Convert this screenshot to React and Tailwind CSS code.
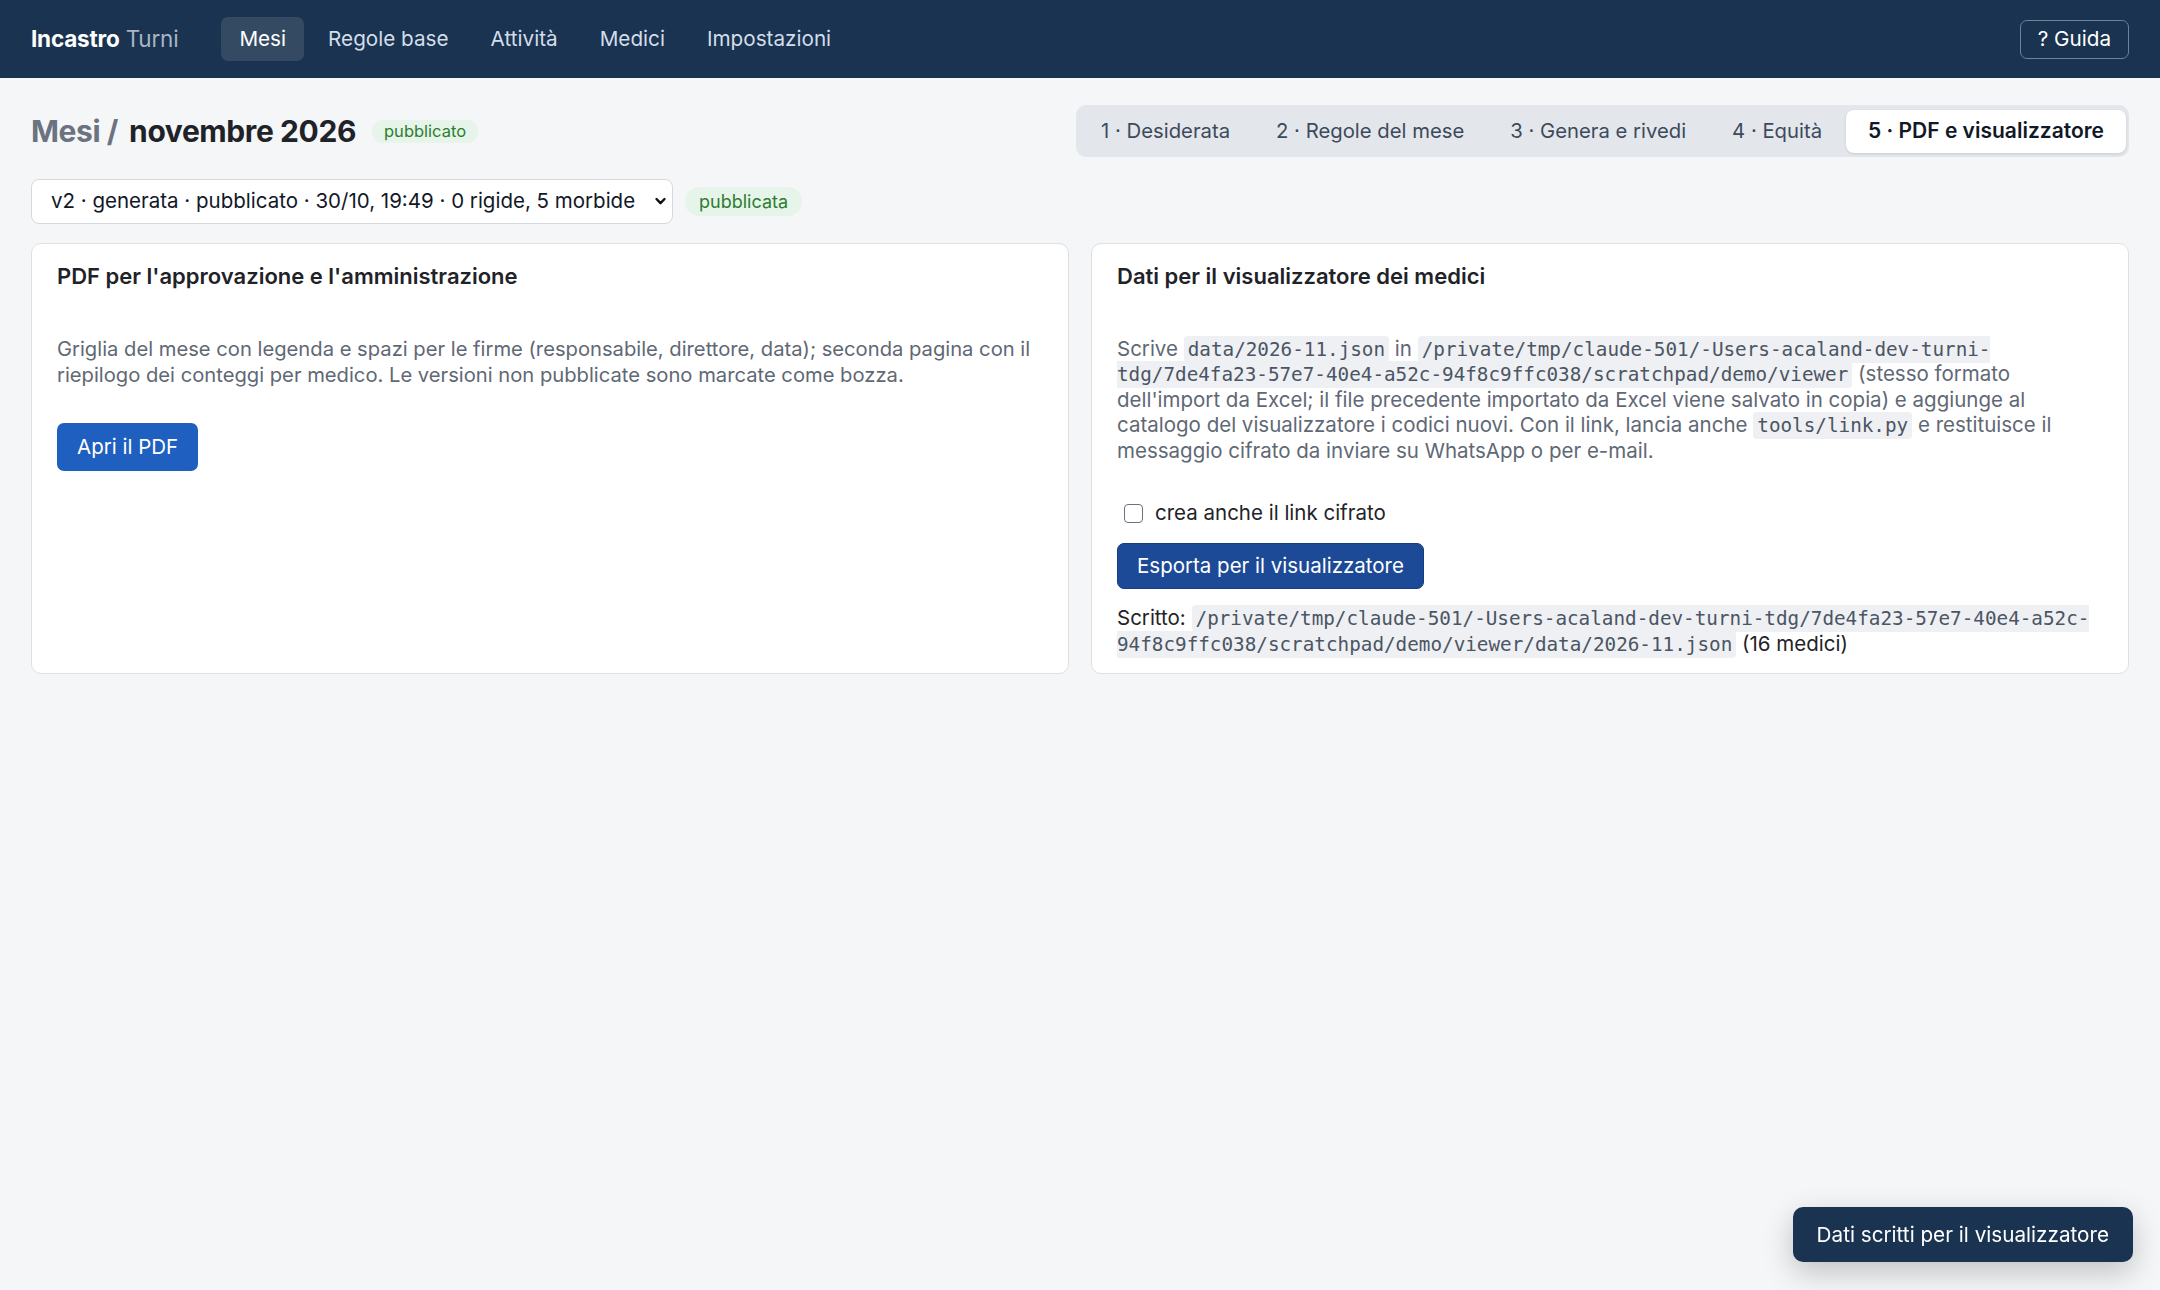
import React from "react";

const navItems = ["Mesi", "Regole base", "Attività", "Medici", "Impostazioni"];
const tabs = [
  "1 · Desiderata",
  "2 · Regole del mese",
  "3 · Genera e rivedi",
  "4 · Equità",
  "5 · PDF e visualizzatore",
];

function Code({ children }) {
  return (
    <code className="font-['DejaVu_Sans_Mono',monospace] text-[19.3px] leading-none bg-[#eef0f3] text-[#4b5563] rounded-[4px] px-[4px] py-[2px]">
      {children}
    </code>
  );
}

export default function App() {
  return (
    <div className="min-h-screen bg-[#f5f6f8] font-['Inter','Noto_Sans',sans-serif] text-[#1f2328]">
      <header className="h-[78px] bg-[#1a3350] flex items-center pl-[31px] pr-[31px]">
        <div className="text-[22.5px] tracking-[-0.2px]">
          <span className="font-bold text-white">Incastro</span>{" "}
          <span className="text-[#a9b5c4]">Turni</span>
        </div>
        <nav className="ml-[43px] flex items-center gap-[6px]">
          {navItems.map((n, i) => (
            <a
              key={n}
              className={
                i === 0
                  ? "h-[44px] flex items-center px-[18px] rounded-[7px] bg-[#344a63] text-white text-[20.7px]"
                  : "h-[44px] flex items-center px-[18px] rounded-[7px] text-[#d3deea] text-[20.7px]"
              }
            >
              {n}
            </a>
          ))}
        </nav>
        <button className="ml-auto h-[39px] px-[17px] rounded-[7px] border border-[#6c819a] text-white text-[20.7px] flex items-center">
          ? Guida
        </button>
      </header>

      <main className="px-[31px] pt-[27px]">
        <div className="flex items-center justify-between">
          <div className="flex items-center">
            <h1 className="text-[30px] font-bold tracking-[-0.4px] leading-none">
              <span className="text-[#6b7280]">Mesi /</span>
              <span className="ml-[11px] text-[#1f2328]">novembre 2026</span>
            </h1>
            <span className="ml-[16px] h-[23px] px-[12px] rounded-full bg-[#e6f4e9] text-[#2e7d32] text-[16.5px] flex items-center">
              pubblicato
            </span>
          </div>
          <div className="h-[52px] flex items-center gap-[2px] px-[3px] rounded-[10px] bg-[#e3e6eb]">
            {tabs.map((t, i) => (
              <div
                key={t}
                className={
                  i === 4
                    ? "h-[43px] flex items-center px-[22px] rounded-[8px] bg-white text-[#111827] font-semibold text-[21px] shadow-[0_1px_3px_rgba(0,0,0,0.12)]"
                    : "h-[43px] flex items-center px-[22px] rounded-[8px] text-[#3d4a5c] text-[20.3px]"
                }
              >
                {t}
              </div>
            ))}
          </div>
        </div>

        <div className="mt-[22px] flex items-center gap-[12px]">
          <div className="relative">
            <select className="appearance-none w-[642px] h-[45px] pl-[19px] pr-[30px] bg-white border border-[#d5d9df] rounded-[8px] text-[20.5px] text-[#111827] outline-none">
              <option>v2 · generata · pubblicato · 30/10, 19:49 · 0 rigide, 5 morbide</option>
            </select>
            <svg
              className="absolute right-[6px] top-[17px] pointer-events-none"
              width="13"
              height="11"
              viewBox="0 0 13 11"
              fill="none"
            >
              <path d="M2.5 3l4 4.2 4-4.2" stroke="#111" strokeWidth="2.4" strokeLinecap="round" strokeLinejoin="round" />
            </svg>
          </div>
          <span className="h-[29px] px-[14px] rounded-full bg-[#e6f4e9] text-[#2e7d32] text-[18px] flex items-center">
            pubblicata
          </span>
        </div>

        <div className="mt-[19px] grid grid-cols-2 gap-[22px]">
          <section className="bg-white border border-[#dde0e5] rounded-[10px] px-[25px] pt-[19px] pb-[16px]">
            <h2 className="text-[22px] font-semibold leading-[26px] text-[#1f2328]">
              PDF per l'approvazione e l'amministrazione
            </h2>
            <p className="mt-[47px] text-[20.2px] leading-[26px] text-[#5f6875]">
              Griglia del mese con legenda e spazi per le firme (responsabile, direttore, data); seconda pagina con il riepilogo dei conteggi per medico. Le versioni non pubblicate sono marcate come bozza.
            </p>
            <button className="mt-[35px] h-[48px] px-[20px] rounded-[7px] bg-[#1f5fbf] text-white text-[20.5px]">
              Apri il PDF
            </button>
          </section>

          <section className="bg-white border border-[#dde0e5] rounded-[10px] px-[25px] pt-[19px] pb-[16px]">
            <h2 className="text-[22px] font-semibold leading-[26px] text-[#1f2328]">
              Dati per il visualizzatore dei medici
            </h2>
            <p className="mt-[47px] text-[20.5px] leading-[25.4px] text-[#5f6875]">
              Scrive <Code>data/2026-11.json</Code> in{" "}
              <Code>
                /private/tmp/claude-501/-Users-acaland-dev-turni-
                <span className="whitespace-nowrap">tdg/7de4fa23-57e7-40e4-a52c-94f8c9ffc038/scratchpad/demo/viewer</span>
              </Code>{" "}
              (stesso formato dell'import da Excel; il file precedente importato da Excel viene salvato in copia) e aggiunge al catalogo del visualizzatore i codici nuovi. Con il link, lancia anche <Code>tools/link.py</Code> e restituisce il messaggio cifrato da inviare su WhatsApp o per e-mail.
            </p>
            <label className="mt-[37px] flex items-center h-[26px] text-[20.5px] text-[#1f2328]">
              <span className="ml-[7px] w-[19px] h-[19px] rounded-[4px] border-[1.5px] border-[#6b7280] bg-white"></span>
              <span className="ml-[12px]">crea anche il link cifrato</span>
            </label>
            <button className="mt-[17px] h-[46px] px-[19px] rounded-[7px] bg-[#1c4a96] border border-[#163d80] text-white text-[20.5px]">
              Esporta per il visualizzatore
            </button>
            <p className="mt-[16px] text-[20.5px] leading-[26px] text-[#1f2328]">
              Scritto:{" "}
              <Code>
                /private/tmp/claude-501/-Users-acaland-dev-turni-tdg/7de4fa23-57e7-40e4-a52c-
                <span className="whitespace-nowrap">94f8c9ffc038/scratchpad/demo/viewer/data/2026-11.json</span>
              </Code>{" "}
              (16 medici)
            </p>
          </section>
        </div>
      </main>

      <div className="fixed bottom-[28px] right-[27px] h-[55px] px-[24px] rounded-[10px] bg-[#1a3350] text-white text-[20.7px] flex items-center shadow-[0_10px_30px_rgba(0,0,0,0.22)]">
        Dati scritti per il visualizzatore
      </div>
    </div>
  );
}
